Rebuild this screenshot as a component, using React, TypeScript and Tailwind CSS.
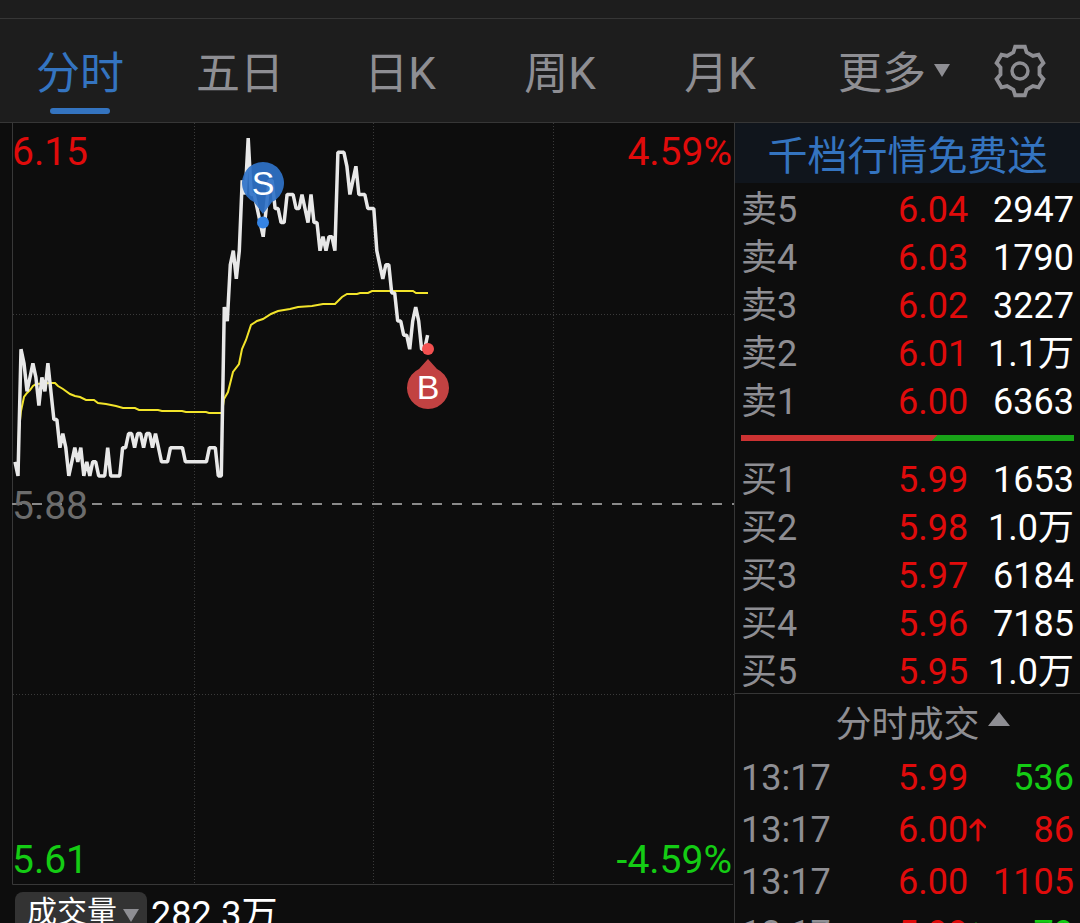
import { useState } from 'react'

type Level = { label: string; price: string; volume: string }
type Trade = { time: string; price: string; volume: string; side: 'buy' | 'sell'; move?: 'up' | 'down' }

const TABS = ['分时', '五日', '日K', '周K', '月K']

const ASKS: Level[] = [
  { label: '卖5', price: '6.04', volume: '2947' },
  { label: '卖4', price: '6.03', volume: '1790' },
  { label: '卖3', price: '6.02', volume: '3227' },
  { label: '卖2', price: '6.01', volume: '1.1万' },
  { label: '卖1', price: '6.00', volume: '6363' },
]

const BIDS: Level[] = [
  { label: '买1', price: '5.99', volume: '1653' },
  { label: '买2', price: '5.98', volume: '1.0万' },
  { label: '买3', price: '5.97', volume: '6184' },
  { label: '买4', price: '5.96', volume: '7185' },
  { label: '买5', price: '5.95', volume: '1.0万' },
]

const TRADES: Trade[] = [
  { time: '13:17', price: '5.99', volume: '536', side: 'sell' },
  { time: '13:17', price: '6.00', volume: '86', side: 'buy', move: 'up' },
  { time: '13:17', price: '6.00', volume: '1105', side: 'buy' },
  { time: '13:17', price: '5.99', volume: '79', side: 'sell', move: 'down' },
]

// one price per minute, in cents
const PRICES = [
  591, 590, 599, 598, 596, 597, 598, 597, 595, 597, 596, 598, 596, 594, 594, 592, 593, 592, 590, 591,
  592, 591, 592, 590, 591, 590, 591, 591, 590, 590, 590, 592, 590, 590, 590, 590, 592, 592, 593, 593,
  592, 593, 593, 592, 593, 593, 592, 593, 592, 591, 591, 591, 592, 592, 592, 592, 592, 591, 591, 591,
  591, 591, 591, 591, 591, 592, 592, 592, 590, 590, 602, 601, 605, 606, 604, 606, 611, 610, 614, 610,
  610, 609, 608, 607, 609, 611, 611, 609, 609, 608, 608, 610, 610, 610, 609, 609, 610, 609, 608, 610,
  608, 608, 606, 607, 606, 607, 607, 606, 613, 613, 613, 612, 610, 611, 612, 610, 610, 610, 609, 609,
  609, 606, 605, 604, 605, 605, 603, 603, 601, 601, 600, 600, 599, 601, 602, 601, 599, 599, 600,
]

const AVERAGE =
  '18,353 19,307 21,288 24,274 27,270 30,267 33,263 36,261 50,260 55,260 58,263 63,266 70,271 75,273 80,274 86,277 94,277 98,280 106,281 116,283 123,285 135,285 139,287 158,287 162,288 182,288 186,289 206,289 209,290 222,290 224,276 228,269 233,249 239,241 242,226 246,217 251,202 257,198 263,196 271,191 278,188 290,186 298,184 312,183 323,181 335,181 338,178 342,174 347,171 357,171 360,170 368,170 372,168 413,168 416,170 428,170'

const PRICE_LINE = PRICES.map((p, i) => `${(15 + i * 2.99).toFixed(1)},${(381 - (p - 588) * 14.07).toFixed(1)}`).join(' ')

function Gear() {
  return (
    <svg viewBox="-78 -78 156 156" className="size-[54px]" fill="none" stroke="currentColor" strokeWidth="11">
      <path d="M-14-70H14L19-54 37.3-43.5 53.6-47.1 67.6-22.9 56.3-10.5V10.5L67.6 22.9 53.6 47.1 37.3 43.5 19 54 14 70H-14L-19 54-37.3 43.5-53.6 47.1-67.6 22.9-56.3 10.5V-10.5L-67.6-22.9-53.6-47.1-37.3-43.5-19-54Z" />
      <circle r="23" strokeWidth="10" />
    </svg>
  )
}

function MoveArrow({ move }: { move: 'up' | 'down' }) {
  return (
    <svg
      viewBox="0 0 18 24"
      className={move === 'up' ? 'h-6 w-[18px] text-[#e00b0b]' : 'h-6 w-[18px] rotate-180 text-[#14cc14]'}
      fill="none"
      stroke="currentColor"
      strokeWidth="3"
      strokeLinecap="round"
      strokeLinejoin="round"
    >
      <path d="M10 22V2M3 9L10 2L17 9" />
    </svg>
  )
}

function Chart() {
  return (
    <svg viewBox="0 0 734 762" className="block w-full font-[Roboto,sans-serif] text-[39px]" fill="none">
      <g stroke="#3a3a3a" strokeDasharray="1 2">
        <path d="M194.500 0V761M373.500 0V761M553.500 0V761M13 191.500H734M13 571.500H734" />
      </g>
      <path d="M12.500 0V761.500H733" stroke="#383838" />
      <path d="M12 381H734" stroke="#8a8a8a" strokeWidth="2" strokeDasharray="10 10" />
      <polyline points={AVERAGE} stroke="#f2e42a" strokeWidth="2" />
      <polyline points={PRICE_LINE} stroke="#e8e8e8" strokeWidth="3.500" strokeLinejoin="bevel" />

      <text x="12" y="42" fill="#e00b0b">6.15</text>
      <text x="732" y="42" fill="#e00b0b" textAnchor="end">4.59%</text>
      <text x="12" y="396" fill="#6c6c6c">5.88</text>
      <text x="12" y="750" fill="#14cc14">5.61</text>
      <text x="732" y="750" fill="#14cc14" textAnchor="end">-4.59%</text>

      <path d="M263 91L254 79A21 21 0 1 1 272 79Z" fill="#2f72c8" fillOpacity="0.92" />
      <circle cx="263" cy="99.500" r="6" fill="#3584e4" />
      <text x="263" y="72" fill="#fff" textAnchor="middle" className="font-['Liberation_Sans',sans-serif] text-[34px]">S</text>

      <circle cx="428" cy="226" r="6" fill="#f25050" />
      <path d="M428 236L419 246A21 21 0 1 0 437 246Z" fill="#c24242" />
      <text x="428" y="276" fill="#fff" textAnchor="middle" className="font-['Liberation_Sans',sans-serif] text-[34px]">B</text>
    </svg>
  )
}

function Book({ levels, name }: { levels: Level[]; name: string }) {
  return (
    <table aria-label={name} className="w-full table-fixed text-left leading-[42px]">
      <tbody>
        {levels.map((l) => (
          <tr key={l.label}>
            <th scope="row" className="w-[163px] pt-[6px] pl-[6px] font-normal text-[#8e8e93]">{l.label}</th>
            <td className="w-[72px] pt-[6px] text-[#e00b0b]">{l.price}</td>
            <td className="pt-[6px] pr-[6px] text-right text-white">{l.volume}</td>
          </tr>
        ))}
      </tbody>
    </table>
  )
}

export default function App() {
  const [active, setActive] = useState('分时')

  return (
    <main className="flex h-screen flex-col overflow-hidden bg-[#0d0d0d] font-[Roboto,'Noto_Sans_CJK_SC',sans-serif]">
      <header className="shrink-0 border-b border-[#363636] bg-[#1d1d1d] text-[#8e8e93]">
        <div className="h-[19px] border-b border-[#363636]" />
        <nav className="flex text-[44px] leading-[60px]">
          {TABS.map((tab) => (
            <button
              key={tab}
              onClick={() => setActive(tab)}
              className={`flex flex-4 basis-0 flex-col items-center gap-[4px] pt-[25px] pb-2 ${tab === active ? 'text-[#3474c0]' : ''}`}
            >
              {tab}
              <span className={`h-[6px] w-[60px] rounded-full ${tab === active ? 'bg-[#3474c0]' : ''}`} />
            </button>
          ))}
          <button className="flex flex-4 basis-0 items-start justify-center pt-[25px]">
            更多
            <svg viewBox="0 0 16 13" className="mt-5 -mr-7 ml-2 h-[13px] w-4" fill="currentColor">
              <path d="M0 0H16L8 13Z" />
            </svg>
          </button>
          <button aria-label="设置" className="flex flex-3 basis-0 items-center justify-center">
            <Gear />
          </button>
        </nav>
      </header>

      <div className="flex min-h-0 flex-1">
        <section className="min-w-0 flex-1">
          <Chart />
          <div className="flex items-start gap-1 pt-[7px] pl-[15px] text-white">
            <label className="relative">
              <select aria-label="指标" className="block h-10 w-[132px] appearance-none rounded-lg bg-[#333] pl-3 text-[30px] leading-10">
                <option>成交量</option>
              </select>
              <svg viewBox="0 0 16 13" className="pointer-events-none absolute top-[17px] right-2 h-[13px] w-4" fill="#8e8e93">
                <path d="M0 0H16L8 13Z" />
              </svg>
            </label>
            <span className="text-[36px] leading-[46px]">282.3万</span>
          </div>
        </section>

        <aside className="w-[346px] shrink-0 border-l border-[#363636] text-[36px]">
          <a href="#level2" className="block bg-[#10151c] pt-2 text-center text-[40px] leading-[52px] text-[#3474c0]">
            千档行情免费送
          </a>
          <Book levels={ASKS} name="卖盘" />
          <div className="mx-[6px] mt-3 h-[6px] bg-[#18a318]">
            <div className="h-full w-[59%] bg-[#cb3232] [clip-path:polygon(0_0,100%_0,calc(100%-6px)_100%,0_100%)]" />
          </div>
          <div className="mt-3 border-b border-[#363636]">
            <Book levels={BIDS} name="买盘" />
          </div>
          <button className="flex w-full items-center justify-center pt-1 leading-[54px] text-[#8e8e93]">
            分时成交
            <svg viewBox="0 0 22 14" className="-mr-[30px] mb-3 ml-2 h-[14px] w-[22px]" fill="currentColor">
              <path d="M11 0L22 14H0Z" />
            </svg>
          </button>
          <table aria-label="分时成交" className="w-full table-fixed leading-[52px]">
            <tbody>
              {TRADES.map((t, i) => (
                <tr key={i}>
                  <td className="w-[163px] pl-[6px] text-[#8e8e93]">{t.time}</td>
                  <td className="w-[90px] text-[#e00b0b]">
                    <span className="flex items-center">
                      {t.price}
                      {t.move && <MoveArrow move={t.move} />}
                    </span>
                  </td>
                  <td className={`pr-[6px] text-right ${t.side === 'sell' ? 'text-[#14cc14]' : 'text-[#e00b0b]'}`}>{t.volume}</td>
                </tr>
              ))}
            </tbody>
          </table>
        </aside>
      </div>
    </main>
  )
}
